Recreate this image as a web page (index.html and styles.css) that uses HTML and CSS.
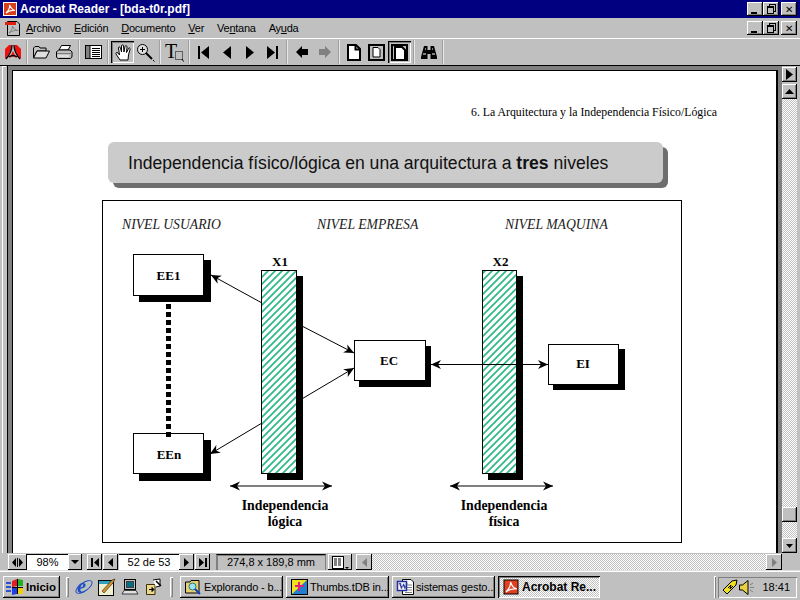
FILE: index.html

```html
<!DOCTYPE html>
<html lang="es">
<head>
  <meta charset="UTF-8" />
  <title>Acrobat Reader - [bda-t0r.pdf]</title>
  <link rel="stylesheet" href="styles.css">
</head>
<body>
  <div class="titlebar">
    <svg class="title-icon" width="14" height="14" viewBox="0 0 14 14"><rect x=".5" y=".5" width="13" height="13" fill="#d8401c" stroke="#fff"/><path d="M3 11 C6 8 7 5 6.500 3 C8 6 9 8 12 8.500 C9 8 5 9 3 11Z" fill="none" stroke="#fff" stroke-width="1.200"/></svg>
    <span class="title-text">Acrobat Reader - [bda-t0r.pdf]</span>
    <div class="win-btns">
      <span class="win-btn"><i class="min"></i></span>
      <span class="win-btn"><i class="rest"></i></span>
      <span class="win-btn close">&#10005;</span>
    </div>
  </div>

  <div class="menubar">
    <svg class="menu-icon" width="17" height="17" viewBox="0 0 17 17"><path d="M3.500 1.500H13L15.500 4V15.500H3.500Z" fill="#c0c0c0" stroke="#000"/><rect x="1" y="2" width="11" height="3" fill="#e02010"/><path d="M5 13C8 10 9 7 8.500 6C10 9 11 10 14 10.500C11 10 8 11 5 13Z" fill="none" stroke="#808080"/></svg>
    <span class="menu-item"><u>A</u>rchivo</span>
    <span class="menu-item"><u>E</u>dición</span>
    <span class="menu-item"><u>D</u>ocumento</span>
    <span class="menu-item"><u>V</u>er</span>
    <span class="menu-item">Ve<u>n</u>tana</span>
    <span class="menu-item">Ay<u>u</u>da</span>
    <div class="win-btns">
      <span class="win-btn"><i class="min"></i></span>
      <span class="win-btn"><i class="rest"></i></span>
      <span class="win-btn close">&#10005;</span>
    </div>
  </div>

  <div class="toolbar">
    <span class="tool"><svg width="16" height="16" viewBox="0 0 16 16"><path d="M0 15V5L4 1H6.500C6.500 6 4 11 0 15ZM16 15V5L12 1H9.500C9.500 6 12 11 16 15ZM4.500 14C7 12 9 12 11.500 14L8 7Z" fill="#f01010"/><path d="M7 1C7 6 4.500 11 1 15M9 1C9 6 11.500 11 15 15M4 13C7 11 9 11 12 13" fill="none" stroke="#000" stroke-width="1.300"/></svg></span>
    <span class="sep"></span>
    <span class="tool"><svg width="17" height="14" viewBox="0 0 17 14"><path d="M.5 13V3L2 1.500H6L7 3H13V6H4L.5 13Z" fill="#c0c0c0" stroke="#000"/><path d="M.5 13L4 6H16.500L13 13Z" fill="#dfdfdf" stroke="#000"/></svg></span>
    <span class="tool"><svg width="17" height="15" viewBox="0 0 17 15"><path d="M5.500 .5H14.500L12 5H3Z" fill="#fff" stroke="#000"/><path d="M2.500 5H14L16 7V11C16 12.500 15 13.500 14 13.500H2.500C1 13.500 .5 12.500 .5 11V7Z" fill="#c0c0c0" stroke="#000"/><path d="M1 8.500H15.500" stroke="#808080"/><path d="M2 11H13" stroke="#fff"/></svg></span>
    <span class="sep"></span>
    <span class="tool"><svg width="17" height="14" viewBox="0 0 17 14"><rect x=".5" y=".5" width="16" height="13" fill="#fff" stroke="#000"/><rect x="1" y="1" width="4" height="12" fill="#808080"/><path d="M5 .5V13.500M7 3.500H15M7 5.500H15M7 7.500H15M7 9.500H15M7 11.500H15" stroke="#000"/></svg></span>
    <span class="sep"></span>
    <span class="tool on"><svg width="18" height="18" viewBox="0 0 18 18"><path d="M6 17L2 11C1.500 9.500 3 9 4 10L5.500 12L4.500 5C4.500 3.500 6 3.500 6.500 5L7.500 9V3C7.500 1.500 9.500 1.500 9.500 3L10 9L11 3.500C11.300 2 13 2.300 13 4L12.500 9.500L14.500 5.500C15 4.200 16.500 4.800 16 6.500L14.500 12L14 17Z" fill="#fff" stroke="#000"/></svg></span>
    <span class="tool"><svg width="19" height="19" viewBox="0 0 19 19"><circle cx="6.500" cy="6.500" r="5" fill="#dfdfdf" stroke="#000"/><path d="M4 6.500H9M6.500 4V9" stroke="#000"/><path d="M10 10L16 16" stroke="#000" stroke-width="2"/><path d="M17 17L18.500 18.500" stroke="#000"/></svg></span>
    <span class="sep"></span>
    <span class="tool"><svg class="free" width="19" height="19" viewBox="0 0 19 19"><text class="t-glyph" x="0" y="15">T</text><rect x="10.500" y="8.500" width="7" height="8" fill="none" stroke="#000" stroke-dasharray="1 1"/><path d="M17 16L18.500 18.500" stroke="#000"/></svg></span>
    <span class="sep"></span>
    <span class="tool"><svg width="11" height="13" viewBox="0 0 11 13"><path d="M0 0H2V13H0ZM11 0V13L3 6.500Z"/></svg></span>
    <span class="tool"><svg width="8" height="13" viewBox="0 0 8 13"><path d="M8 0V13L0 6.500Z"/></svg></span>
    <span class="tool"><svg width="8" height="13" viewBox="0 0 8 13"><path d="M0 0V13L8 6.500Z"/></svg></span>
    <span class="tool"><svg width="11" height="13" viewBox="0 0 11 13"><path d="M0 0V13L8 6.500ZM9 0H11V13H9Z"/></svg></span>
    <span class="sep"></span>
    <span class="tool"><svg width="12" height="12" viewBox="0 0 12 12"><path d="M6 0V3H12V9H6V12L0 6Z"/></svg></span>
    <span class="tool"><svg width="12" height="12" viewBox="0 0 12 12"><path d="M6 0V3H0V9H6V12L12 6Z" fill="#808080"/></svg></span>
    <span class="sep"></span>
    <span class="tool"><svg width="14" height="17" viewBox="0 0 14 17"><path d="M1 1H9L13 5V16H1Z" fill="#fff" stroke="#000" stroke-width="2"/><path d="M8.500 1V5.500H13" fill="none" stroke="#000" stroke-width="2"/></svg></span>
    <span class="tool"><svg width="17" height="17" viewBox="0 0 17 17"><rect x="1" y="1" width="15" height="15" fill="#c0c0c0" stroke="#000" stroke-width="2"/><path d="M5 3.500H10L12 5.500V13H5Z" fill="#fff" stroke="#000"/></svg></span>
    <span class="tool on"><svg width="17" height="17" viewBox="0 0 17 17"><rect x="1" y="1" width="15" height="15" fill="#c0c0c0" stroke="#000" stroke-width="2"/><path d="M4 3H11L14 6V16H4Z" fill="#fff" stroke="#000" stroke-width="2"/></svg></span>
    <span class="sep"></span>
    <span class="tool"><svg width="16" height="14" viewBox="0 0 16 14"><path d="M3 1H6.500V5H9.500V1H13L16 12V14H9.500V9H6.500V14H0V12Z"/><path d="M2 9H5M11 9H14M4 4H5M11 4H12" stroke="#fff"/></svg></span>
    <span class="sep"></span>
  </div>

  <div class="viewer">
    <div class="gutter"><span class="grip"></span></div>
    <div class="pane">
      <div class="page">
        <p class="page-head">6. La Arquitectura y la Independencia Físico/Lógica</p>
        <div class="slide-title">Independencia físico/lógica en una arquitectura a <b>tres</b> niveles</div>
        <div class="diagram">
          <svg width="580" height="343" viewBox="102 200 580 343">
            <defs>
              <pattern id="hatch" width="7" height="7" patternUnits="userSpaceOnUse">
                <path d="M-1 8L8 -1M-4 4L4 -4M3 11L11 3" stroke="#2eb886" stroke-width="1.700"/>
              </pattern>
              <marker id="head" markerUnits="userSpaceOnUse" markerWidth="11" markerHeight="10" refX="10" refY="5" orient="auto-start-reverse">
                <path d="M10 5L0 .5L3 5L0 9.500Z"/>
              </marker>
            </defs>

            <text class="level" x="122" y="229">NIVEL USUARIO</text>
            <text class="level" x="317" y="229">NIVEL EMPRESA</text>
            <text class="level" x="505" y="229">NIVEL MAQUINA</text>

            <path class="wire" d="M262 303L211 275" marker-end="url(#head)"/>
            <path class="wire" d="M262 423L210 454" marker-end="url(#head)"/>
            <path class="wire" d="M300 325L354 353" marker-end="url(#head)"/>
            <path class="wire" d="M300 400L354 368" marker-end="url(#head)"/>

            <rect x="139" y="260" width="72" height="42"/>
            <rect class="node" x="133.500" y="254.500" width="70" height="41"/>
            <text class="label" x="168.500" y="280">EE1</text>

            <rect x="139" y="440" width="72" height="41"/>
            <rect class="node" x="133.500" y="433.500" width="70" height="40"/>
            <text class="label" x="169" y="459">EEn</text>

            <path class="dots" d="M168.500 304V439"/>

            <rect x="267" y="276" width="36" height="204"/>
            <rect class="bar-bg" x="261.500" y="270.500" width="35" height="203"/>
            <rect class="bar" x="261.500" y="270.500" width="35" height="203"/>
            <text class="label" x="280" y="266">X1</text>

            <rect x="488" y="276" width="35" height="204"/>
            <rect class="bar-bg" x="482.500" y="270.500" width="34" height="203"/>
            <rect class="bar" x="482.500" y="270.500" width="34" height="203"/>
            <text class="label" x="500.500" y="266">X2</text>

            <rect x="359" y="346" width="72" height="41"/>
            <rect class="node" x="354.500" y="340.500" width="71" height="40"/>
            <text class="label" x="389" y="365">EC</text>

            <rect x="553" y="349" width="72" height="41"/>
            <rect class="node" x="548.500" y="344.500" width="70" height="40"/>
            <text class="label" x="583" y="368">EI</text>

            <path class="wire" d="M431 364.500H548" marker-start="url(#head)" marker-end="url(#head)"/>
            <path class="wire" d="M230 486H332" marker-start="url(#head)" marker-end="url(#head)"/>
            <path class="wire" d="M450 486H553" marker-start="url(#head)" marker-end="url(#head)"/>

            <text class="label caption" x="285" y="510">Independencia</text>
            <text class="label caption" x="285" y="526">lógica</text>
            <text class="label caption" x="504" y="510">Independencia</text>
            <text class="label caption" x="504" y="526">física</text>
          </svg>
        </div>
      </div>
    </div>
    <div class="vscroll">
      <span class="sb-btn side"><svg width="7" height="11" viewBox="0 0 7 11"><path d="M0 0V11L7 5.500Z"/></svg></span>
      <span class="sb-btn up"><svg width="9" height="5" viewBox="0 0 9 5"><path d="M0 5H9L4.500 0Z"/></svg></span>
      <span class="track grow"></span>
      <span class="sb-btn thumb"></span>
      <span class="track low"></span>
      <span class="sb-btn up"><svg width="7" height="4" viewBox="0 0 7 4"><path d="M0 0H7L3.500 4Z"/></svg></span>
    </div>
  </div>

  <div class="statusbar">
    <span class="st-btn zoom-grip"><svg width="11" height="9" viewBox="0 0 11 9"><path d="M4 0V9L0 4.500ZM7 0V9L11 4.500Z"/><path d="M5.500 0V9" stroke="#000"/></svg></span>
    <span class="field zoom-val">98%</span>
    <span class="st-btn drop"><svg width="8" height="4" viewBox="0 0 8 4"><path d="M0 0H8L4 4Z"/></svg></span>
    <span class="st-btn nav first"><svg width="8" height="9" viewBox="0 0 8 9"><path d="M0 0H2V9H0ZM8 0V9L3 4.500Z"/></svg></span>
    <span class="st-btn nav"><svg width="5" height="9" viewBox="0 0 5 9"><path d="M5 0V9L0 4.500Z"/></svg></span>
    <span class="field page-num">52 de 53</span>
    <span class="st-btn nav"><svg width="5" height="9" viewBox="0 0 5 9"><path d="M0 0V9L5 4.500Z"/></svg></span>
    <span class="st-btn nav"><svg width="8" height="9" viewBox="0 0 8 9"><path d="M0 0V9L5 4.500ZM6 0H8V9H6Z"/></svg></span>
    <span class="size-box">274,8 x 189,8 mm</span>
    <span class="st-btn layout"><svg width="17" height="13" viewBox="0 0 17 13"><rect x=".5" y=".5" width="11" height="12" fill="#fff" stroke="#000"/><path d="M2 3H10M2 5H10M2 7H10M2 9H10" stroke="#000" stroke-dasharray="3 1"/><path d="M13 11H17L15 13Z"/></svg></span>
    <span class="st-btn left-end"><svg width="5" height="9" viewBox="0 0 5 9"><path d="M5 0V9L0 4.500Z" fill="#808080"/></svg></span>
    <span class="track grow"></span>
    <span class="st-btn right-end"><svg width="5" height="9" viewBox="0 0 5 9"><path d="M0 0V9L5 4.500Z" fill="#808080"/></svg></span>
    <span class="corner"></span>
  </div>

  <div class="taskbar">
    <span class="start">
      <svg width="18" height="16" viewBox="0 0 18 16"><path d="M0 3H5V5H0ZM0 7H5V9H0ZM0 11H5V13H0Z" fill="#3050d0"/><path d="M6 2L11 0V7L6 8Z" fill="#e02020"/><path d="M12 0L17 1V7L12 7Z" fill="#20b020"/><path d="M6 9L11 8V15L6 16Z" fill="#2040e0"/><path d="M12 8L17 8V15L12 15Z" fill="#f0d000"/><path d="M11.500 0V15M6 8.500H17" stroke="#000"/></svg>
      Inicio
    </span>
    <span class="handle"></span>
    <span class="quick"><svg class="free" width="20" height="20" viewBox="0 0 20 20"><text class="ie-glyph" x="3" y="16">e</text><ellipse cx="10" cy="10" rx="9.500" ry="4" fill="none" stroke="#2050c0" transform="rotate(-35 10 10)"/></svg></span>
    <span class="quick"><svg width="18" height="18" viewBox="0 0 18 18"><rect x=".5" y="2.500" width="15" height="15" fill="#f0f0d0" stroke="#000"/><rect x="1" y="3" width="14" height="3" fill="#30a0c0"/><path d="M4 13L14 2L17 1L15 5L6 15Z" fill="#d09030" stroke="#000" stroke-width=".5"/></svg></span>
    <span class="quick"><svg width="18" height="18" viewBox="0 0 18 18"><rect x="3.500" y="1.500" width="11" height="10" fill="#c0c0c0" stroke="#000"/><rect x="5.500" y="3.500" width="7" height="6" fill="#007080" stroke="#404040"/><path d="M1 16L3 12.500H15L17 16Z" fill="#dfdfdf" stroke="#000" stroke-width=".7"/></svg></span>
    <span class="quick"><svg width="18" height="18" viewBox="0 0 18 18"><path d="M2.500 6.500H11V16.500H2.500Z" fill="#e8d890" stroke="#403000"/><path d="M5 11.500H8M8 9.500L10 11.500L8 13.500Z" fill="#000" stroke="#000"/><path d="M9 2L16 1V8L12 9" fill="#fff" stroke="#000"/><path d="M12 3L17 8" stroke="#000" stroke-width="1.500"/></svg></span>
    <span class="handle second"></span>
    <span class="task"><svg width="17" height="16" viewBox="0 0 17 16"><path d="M.5 3H5L6 1.500H14V14H.5Z" fill="#e8d070" stroke="#000"/><circle cx="7.500" cy="7.500" r="3.500" fill="#a0e0f0" stroke="#208080"/><path d="M10 10L15 15" stroke="#1040c0" stroke-width="2"/></svg><span class="task-name">Explorando - b...</span></span>
    <span class="task"><svg width="17" height="16" viewBox="0 0 17 16"><rect x=".5" y=".5" width="16" height="15" fill="#f0e020" stroke="#000"/><path d="M1 15L16 1V15Z" fill="#2080d0"/><path d="M8 3V12M4 7H13" stroke="#e02080" stroke-width="2"/></svg><span class="task-name">Thumbs.tDB in...</span></span>
    <span class="task"><svg class="free" width="17" height="16" viewBox="0 0 17 16"><path d="M5.500 .5H14L16.500 3V15.500H5.500Z" fill="#fff" stroke="#000"/><path d="M8 6H15M8 8.500H15M8 11H15M8 13.500H15" stroke="#808080"/><rect x=".5" y="2.500" width="9" height="9" fill="#fff" stroke="#2030a0" stroke-width="1.500"/><text class="w-glyph" x="1.500" y="10">W</text></svg><span class="task-name">sistemas gesto...</span></span>
    <span class="task active"><svg width="17" height="16" viewBox="0 0 17 16"><rect x="1" y="1" width="14" height="14" fill="#e04020" stroke="#000"/><path d="M3 13C6 10 8 7 7.500 3C9 7 10 9 14 10C10 9.500 6 10 3 13Z" fill="none" stroke="#fff" stroke-width="1.200"/></svg><span class="task-name">Acrobat Re...</span></span>
    <span class="handle tray-edge"></span>
    <span class="tray">
      <svg width="18" height="16" viewBox="0 0 18 16"><path d="M2 11L11 2L16 1L15 6L6 15Z" fill="#f0e020" stroke="#000"/><path d="M7 9L10 6L9 10L12 7" fill="none" stroke="#000"/></svg>
      <svg width="16" height="15" viewBox="0 0 16 15"><path d="M.5 5H3.500L9 .5V14.500L3.500 10H.5Z" fill="#e8d040" stroke="#000"/><path d="M11 5L14 3M11 7.500H15M11 10L14 12" stroke="#808080"/></svg>
      <span class="clock">18:41</span>
    </span>
  </div>
</body>
</html>
```

FILE: styles.css

```css
html, body {
  margin: 0;
  height: 100%;
}
body {
  width: 800px;
  height: 600px;
  display: flex;
  flex-direction: column;
  overflow: hidden;
  background: #c0c0c0;
  color: #000;
  font-family: "Liberation Sans", Arial, sans-serif;
  font-size: 11px;
}
svg {
  flex: none;
}
svg.free {
  overflow: visible;
}

/* window chrome */
.titlebar {
  height: 18px;
  flex: none;
  display: flex;
  align-items: center;
  padding: 0 3px;
  background: #000080;
  color: #fff;
  box-sizing: border-box;
}
.title-icon {
  margin-right: 3px;
}
.title-text {
  font-weight: bold;
  font-size: 12px;
}
.win-btns {
  margin-left: auto;
  display: flex;
}
.win-btn {
  width: 16px;
  height: 14px;
  box-sizing: border-box;
  background: #c0c0c0;
  box-shadow: inset -1px -1px #000, inset 1px 1px #fff, inset -2px -2px #808080;
  display: flex;
  align-items: center;
  justify-content: center;
  color: #000;
  font-size: 10px;
}
.win-btn.close {
  margin-left: 2px;
}
.min {
  width: 6px;
  height: 2px;
  background: #000;
  margin-top: 7px;
  margin-right: 2px;
}
.rest {
  width: 5px;
  height: 5px;
  border: 1px solid #000;
  border-top-width: 2px;
  background: #c0c0c0;
  box-shadow: 2px -2px 0 -1px #c0c0c0, 2px -2px 0 0 #000;
  margin-top: 2px;
  margin-right: 2px;
}
.menubar {
  height: 20px;
  flex: none;
  display: flex;
  align-items: center;
  padding: 0 3px 0 4px;
  box-sizing: border-box;
}
.menu-icon {
  margin-right: 5px;
}
.menu-item {
  margin-right: 13px;
  font-size: 11px;
  letter-spacing: -.25px;
}
.toolbar {
  height: 27px;
  flex: none;
  box-sizing: border-box;
  display: flex;
  align-items: center;
  padding-left: 1px;
  border-top: 1px solid #fff;
}
.tool {
  width: 23px;
  height: 22px;
  flex: none;
  box-sizing: border-box;
  display: flex;
  align-items: center;
  justify-content: center;
}
.tool.on {
  box-shadow: inset 1px 1px #000, inset 2px 2px #808080, inset -1px -1px #fff;
}
.sep {
  width: 2px;
  height: 24px;
  flex: none;
  margin: 0 2px;
  background: #e8e8e8;
  border-left: 1px solid #a0a0a0;
  box-sizing: border-box;
}
.t-glyph {
  font-family: "Liberation Serif", serif;
  font-size: 20px;
}

/* document area */
.viewer {
  flex: 1;
  min-height: 0;
  display: flex;
  border-top: 1px solid #000;
}
.gutter {
  width: 8px;
  flex: none;
  box-sizing: border-box;
  padding: 0 1px 0 2px;
  border-right: 1px solid #000;
}
.grip {
  display: block;
  height: 100%;
  background: #c0c0c0;
  box-shadow: inset 1px 1px #fff;
}
.pane {
  width: 774px;
  flex: none;
  box-sizing: border-box;
  background: #808080;
  padding: 4px 4px 0;
  display: flex;
}
.page {
  flex: 1;
  min-width: 0;
  background: #fff;
  border-top: 1px solid #000;
  border-left: 1px solid #000;
  border-right: 2px solid #000;
  overflow: hidden;
}
.page-head {
  margin: 33px 59px 0 0;
  text-align: right;
  font-family: "Liberation Serif", serif;
  font-size: 11.800px;
  line-height: 17px;
}
.slide-title {
  margin: 21px 0 0 95px;
  width: 555px;
  height: 41px;
  box-sizing: border-box;
  padding-left: 20px;
  background: #cbcbcb;
  border-radius: 6px;
  box-shadow: 5px 5px 0 #6e6e6e;
  font-size: 17.600px;
  line-height: 42px;
  color: #111;
}
.diagram {
  margin: 17px 0 0 89px;
  width: 580px;
  height: 343px;
  outline: 1px solid #000;
  outline-offset: -1px;
}
.diagram svg {
  display: block;
}
.level {
  font-family: "Liberation Serif", serif;
  font-style: italic;
  font-size: 13.700px;
  fill: #222;
}
.label {
  font-family: "Liberation Serif", serif;
  font-weight: bold;
  font-size: 13px;
  text-anchor: middle;
}
.caption {
  font-size: 13.800px;
}
.node {
  fill: #fff;
  stroke: #000;
}
.bar-bg {
  fill: #fff;
}
.bar {
  fill: url(#hatch);
  stroke: #000;
}
.wire {
  fill: none;
  stroke: #000;
}
.dots {
  fill: none;
  stroke: #000;
  stroke-width: 5;
  stroke-dasharray: 5 3;
}

/* scrollbars */
.vscroll {
  width: 18px;
  flex: none;
  display: flex;
  flex-direction: column;
  padding: 1px 3px 0 0;
  box-sizing: border-box;
}
.sb-btn {
  height: 15px;
  flex: none;
  background: #c0c0c0;
  box-shadow: inset -1px -1px #000, inset 1px 1px #fff, inset -2px -2px #808080;
  display: flex;
  align-items: center;
  justify-content: center;
}
.sb-btn.side {
  margin-bottom: 2px;
}
.track {
  background: repeating-conic-gradient(#fff 0 25%, #c0c0c0 0 50%) 0 0 / 2px 2px;
}
.track.grow {
  flex: 1;
}
.track.low {
  height: 16px;
  flex: none;
}
.statusbar {
  height: 17px;
  flex: none;
  display: flex;
  padding: 1px 0 0 8px;
  box-sizing: border-box;
}
.st-btn {
  width: 15px;
  flex: none;
  box-sizing: border-box;
  background: #c0c0c0;
  box-shadow: inset -1px -1px #000, inset 1px 1px #fff;
  display: flex;
  align-items: center;
  justify-content: center;
}
.zoom-grip {
  width: 19px;
}
.field {
  flex: none;
  box-sizing: border-box;
  background: #fff;
  border-top: 1px solid #000;
  text-align: center;
  line-height: 15px;
}
.zoom-val {
  width: 41px;
}
.drop {
  width: 14px;
}
.nav {
  margin-right: 1px;
}
.nav.first {
  margin-left: 5px;
}
.page-num {
  width: 60px;
}
.size-box {
  width: 110px;
  flex: none;
  margin-left: 5px;
  box-sizing: border-box;
  border-top: 1px solid #000;
  border-left: 1px solid #808080;
  border-right: 1px solid #808080;
  box-shadow: inset 1px 1px #808080;
  text-align: center;
  line-height: 15px;
}
.layout {
  width: 24px;
  margin-left: 2px;
}
.left-end {
  width: 16px;
  margin-left: 4px;
}
.right-end {
  width: 16px;
}
.corner {
  width: 18px;
  flex: none;
}

/* taskbar */
.taskbar {
  height: 30px;
  flex: none;
  box-sizing: border-box;
  display: flex;
  align-items: center;
  border-top: 1px solid #dfdfdf;
  box-shadow: inset 0 1px #fff;
  padding: 3px 3px 0;
}
.start {
  width: 57px;
  height: 22px;
  flex: none;
  box-sizing: border-box;
  display: flex;
  align-items: center;
  gap: 2px;
  padding-left: 3px;
  font-weight: bold;
  font-size: 11.500px;
  background: #c0c0c0;
  box-shadow: inset -1px -1px #000, inset 1px 1px #fff, inset -2px -2px #808080;
}
.handle {
  width: 3px;
  height: 20px;
  flex: none;
  margin-left: 6px;
  box-shadow: inset 1px 1px #fff, inset -1px -1px #808080;
}
.quick {
  width: 23px;
  flex: none;
  display: flex;
  justify-content: center;
}
.quick:nth-of-type(3) {
  margin-left: 3px;
}
.ie-glyph {
  font-family: "Liberation Serif", serif;
  font-weight: bold;
  font-style: italic;
  font-size: 20px;
  fill: #2050c0;
}
.w-glyph {
  font-family: "Liberation Serif", serif;
  font-weight: bold;
  font-size: 9px;
  fill: #2030a0;
}
.handle.second {
  margin-right: 7px;
}
.task {
  width: 103px;
  height: 22px;
  flex: none;
  box-sizing: border-box;
  margin-right: 3px;
  padding-left: 5px;
  display: flex;
  align-items: center;
  gap: 2px;
  background: #c0c0c0;
  box-shadow: inset -1px -1px #000, inset 1px 1px #fff, inset -2px -2px #808080;
  white-space: nowrap;
  overflow: hidden;
  letter-spacing: -.15px;
}
.task.active {
  width: 102px;
  font-weight: bold;
  font-size: 12px;
  letter-spacing: 0;
  background: repeating-conic-gradient(#fff 0 25%, #c0c0c0 0 50%) 0 0 / 2px 2px;
  box-shadow: inset 1px 1px #000, inset -1px -1px #fff, inset 2px 2px #808080;
}
.handle.tray-edge {
  margin-left: auto;
  margin-right: 2px;
  width: 2px;
  height: 22px;
}
.tray {
  width: 79px;
  height: 21px;
  flex: none;
  box-sizing: border-box;
  display: flex;
  align-items: center;
  padding-left: 3px;
  box-shadow: inset 1px 1px #808080, inset -1px -1px #fff;
}
.clock {
  margin-left: auto;
  margin-right: 7px;
}
```
